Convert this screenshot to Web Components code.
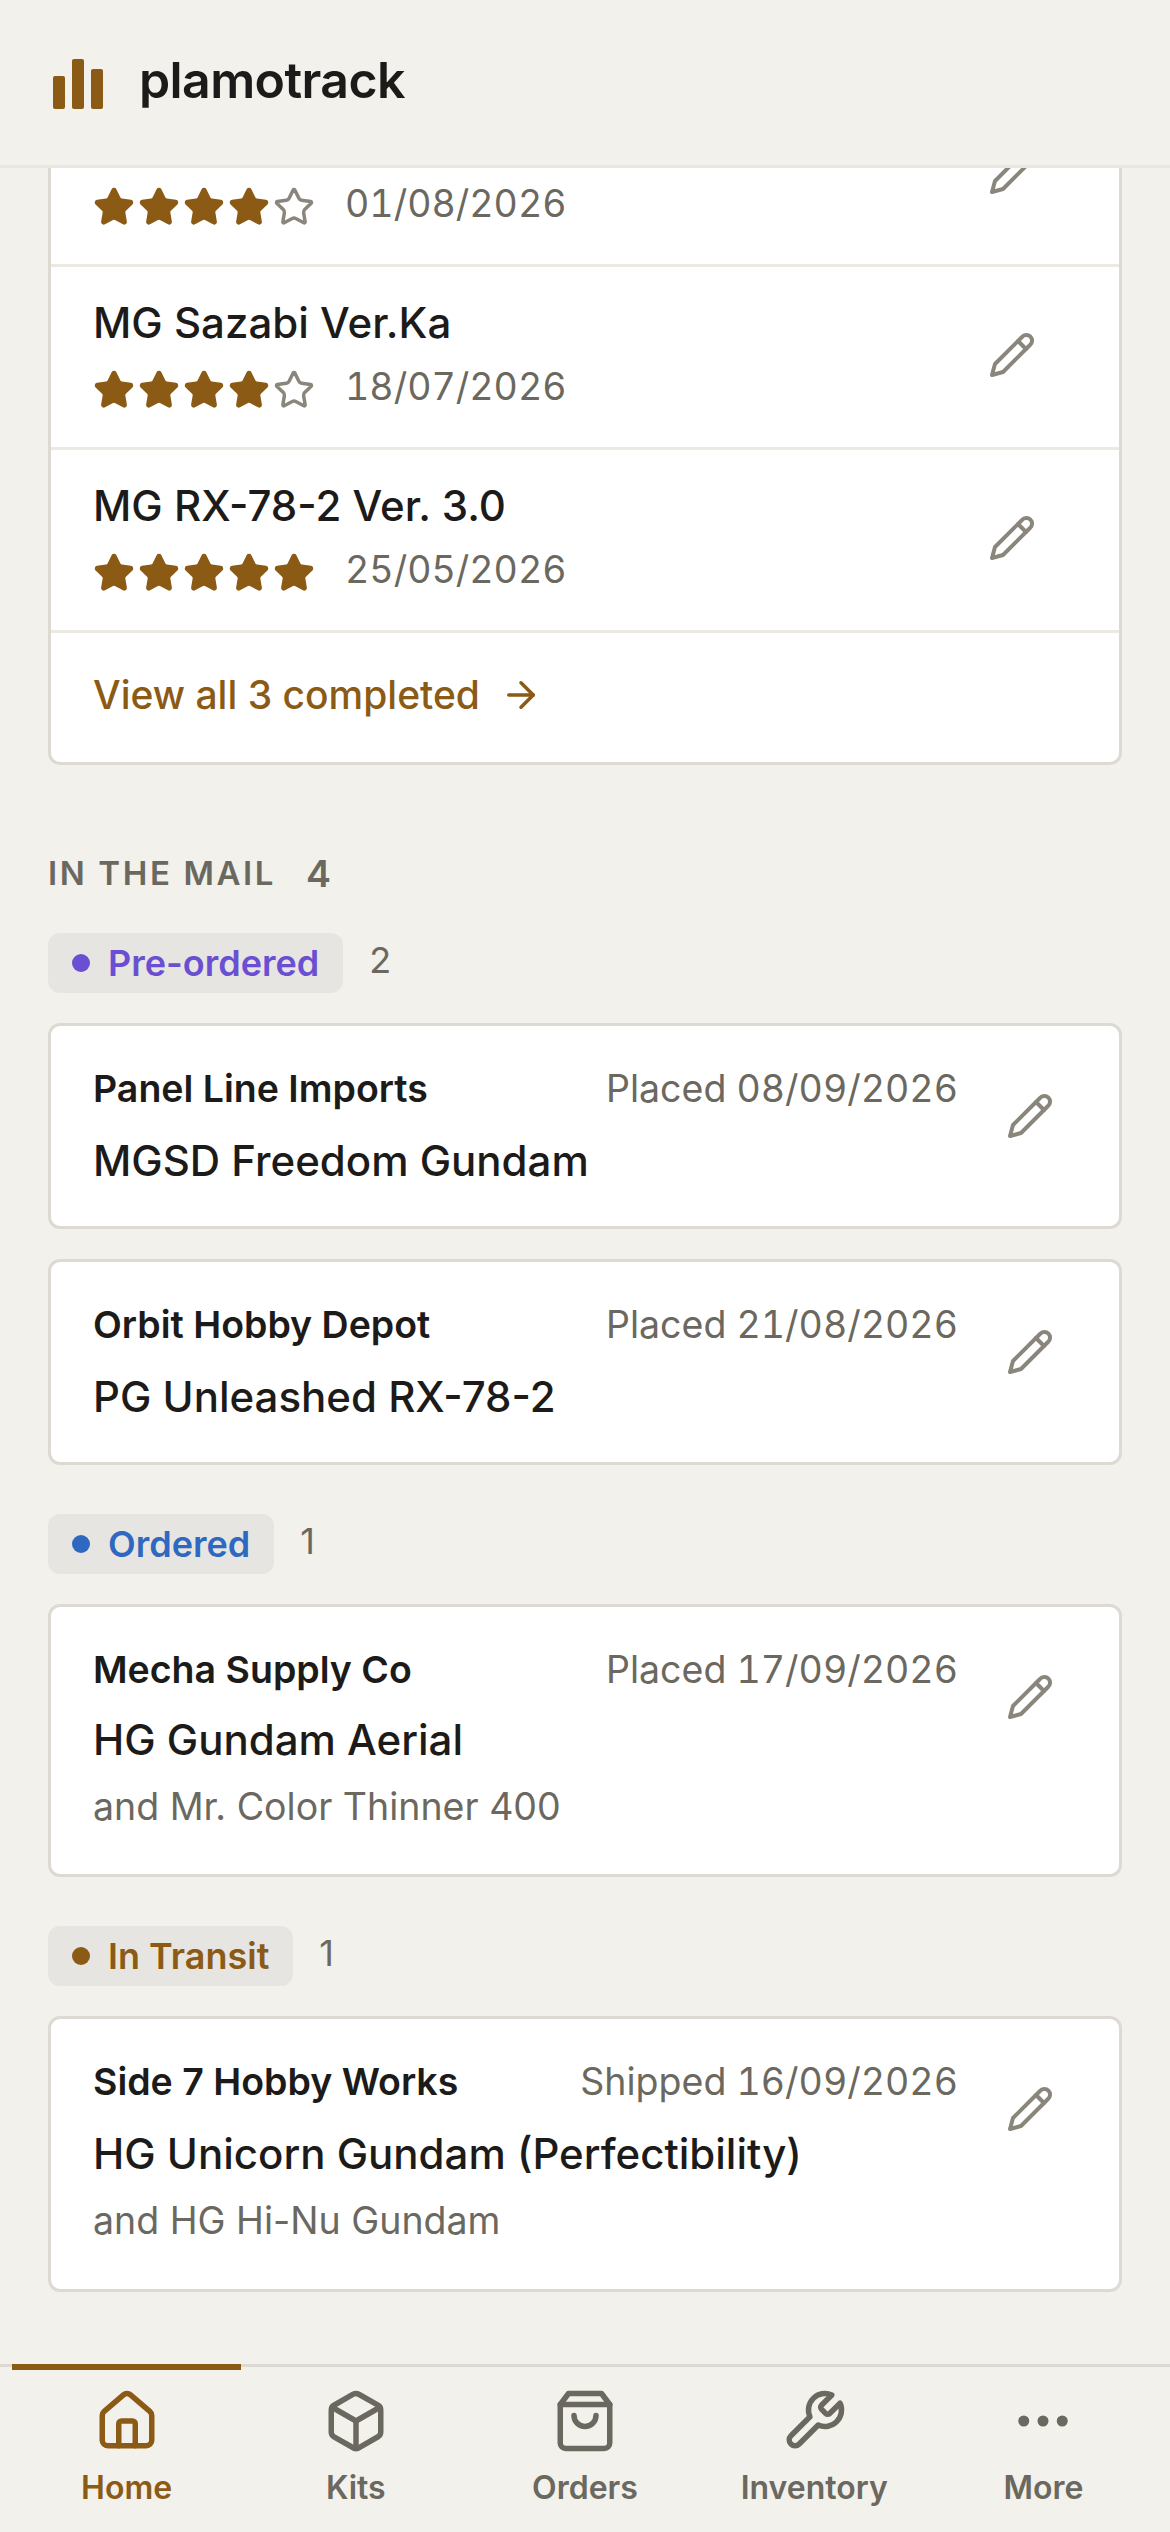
<!DOCTYPE html>
<html>
<head>
<meta charset="utf-8">
<style>
  html, body { margin: 0; padding: 0; }
  body { font-family: Inter, "Liberation Sans", sans-serif; background: #f2f1ec; color: #1c1b19; }
  app-shell { height: 2532px; }
</style>
</head>
<body>
<app-shell>
  <app-header slot="header" name="plamotrack"></app-header>

  <kit-card>
    <kit-row title="&nbsp;" rating="4" date="01/08/2026"></kit-row>
    <kit-row title="MG Sazabi Ver.Ka" rating="4" date="18/07/2026"></kit-row>
    <kit-row title="MG RX-78-2 Ver. 3.0" rating="5" date="25/05/2026"></kit-row>
    <view-all label="View all 3 completed"></view-all>
  </kit-card>

  <section-heading label="In the mail" count="4"></section-heading>

  <status-group label="Pre-ordered" color="#6b4fd3" count="2">
    <order-card shop="Panel Line Imports" date="Placed 08/09/2026" kit="MGSD Freedom Gundam"></order-card>
    <order-card shop="Orbit Hobby Depot" date="Placed 21/08/2026" kit="PG Unleashed RX-78-2"></order-card>
  </status-group>
  <status-group label="Ordered" color="#2f68c0" count="1">
    <order-card style="--kit-gap: 17px; --pad-bottom: 34px" shop="Mecha Supply Co" date="Placed 17/09/2026" kit="HG Gundam Aerial" extra="and Mr. Color Thinner 400"></order-card>
  </status-group>
  <status-group label="In Transit" color="#8b5a14" count="1">
    <order-card shop="Side 7 Hobby Works" date="Shipped 16/09/2026" kit="HG Unicorn Gundam (Perfectibility)" extra="and HG Hi-Nu Gundam"></order-card>
  </status-group>

  <bottom-nav slot="footer">
    <nav-tab icon="house" label="Home" active></nav-tab>
    <nav-tab icon="box" label="Kits"></nav-tab>
    <nav-tab icon="bag" label="Orders"></nav-tab>
    <nav-tab icon="wrench" label="Inventory"></nav-tab>
    <nav-tab icon="dots" label="More"></nav-tab>
  </bottom-nav>
</app-shell>

<script>
const ICONS = {
  house: '<path d="M15 21v-8a1 1 0 0 0-1-1h-4a1 1 0 0 0-1 1v8"/><path d="M3 10a2 2 0 0 1 .709-1.528l7-5.999a2 2 0 0 1 2.582 0l7 5.999A2 2 0 0 1 21 10v9a2 2 0 0 1-2 2H5a2 2 0 0 1-2-2z"/>',
  box: '<path d="M21 8a2 2 0 0 0-1-1.73l-7-4a2 2 0 0 0-2 0l-7 4A2 2 0 0 0 3 8v8a2 2 0 0 0 1 1.73l7 4a2 2 0 0 0 2 0l7-4A2 2 0 0 0 21 16Z"/><path d="m3.3 7 8.7 5 8.7-5"/><path d="M12 22V12"/>',
  bag: '<path d="M6 2 3 6v14a2 2 0 0 0 2 2h14a2 2 0 0 0 2-2V6l-3-4Z"/><path d="M3 6h18"/><path d="M16 10a4 4 0 0 1-8 0"/>',
  wrench: '<path d="M14.7 6.3a1 1 0 0 0 0 1.4l1.6 1.6a1 1 0 0 0 1.4 0l3.77-3.77a6 6 0 0 1-7.94 7.94l-6.91 6.91a2.12 2.12 0 0 1-3-3l6.91-6.91a6 6 0 0 1 7.94-7.94l-3.76 3.76z"/>',
  dots: '<circle cx="5" cy="12" r="1"/><circle cx="12" cy="12" r="1"/><circle cx="19" cy="12" r="1"/>',
  pencil: '<path d="M17 3a2.85 2.83 0 1 1 4 4L7.5 20.5 2 22l1.5-5.5Z"/><path d="m15 5 4 4"/>',
  star: '<path d="M11.525 2.295a.53.53 0 0 1 .95 0l2.31 4.679a2.123 2.123 0 0 0 1.595 1.16l5.166.756a.53.53 0 0 1 .294.904l-3.736 3.638a2.123 2.123 0 0 0-.611 1.878l.882 5.14a.53.53 0 0 1-.771.56l-4.618-2.428a2.122 2.122 0 0 0-1.973 0L6.396 21.01a.53.53 0 0 1-.77-.56l.881-5.139a2.122 2.122 0 0 0-.611-1.879L2.16 9.795a.53.53 0 0 1 .294-.906l5.165-.755a2.122 2.122 0 0 0 1.597-1.16z"/>',
  arrow: '<path d="M5 12h14"/><path d="m12 5 7 7-7 7"/>'
};

function icon(name, size, extra = '') {
  return `<svg width="${size}" height="${size}" viewBox="0 0 24 24" fill="none" stroke="currentColor" stroke-width="2" stroke-linecap="round" stroke-linejoin="round" ${extra}>${ICONS[name]}</svg>`;
}

class AppShell extends HTMLElement {
  constructor() {
    super();
    this.attachShadow({mode: 'open'});
    this.shadowRoot.innerHTML = `
      <style>
        :host { display: flex; flex-direction: column; overflow: hidden; }
        main { flex: 1; min-height: 0; overflow: hidden; padding: 0 48px; }
      </style>
      <slot name="header"></slot>
      <main><slot></slot></main>
      <slot name="footer"></slot>
    `;
  }
}

class AppHeader extends HTMLElement {
  constructor() {
    super();
    this.attachShadow({mode: 'open'});
    this.shadowRoot.innerHTML = `
      <style>
        :host { display: flex; align-items: center; gap: 36px; height: 165px; padding-left: 53px; border-bottom: 3px solid #e9e7e1; background: #f2f1ec; }
        svg { display: block; flex: none; margin-top: 3px; }
        span { font-size: 50px; font-weight: 600; letter-spacing: -0.6px; color: #1c1b19; line-height: 1; padding-bottom: 5px; }
      </style>
      <svg width="50" height="50" viewBox="0 0 50 50" fill="#8b5a14">
        <rect x="0" y="17" width="12" height="33" rx="2"/>
        <rect x="19" y="0" width="12" height="50" rx="2"/>
        <rect x="38" y="10" width="12" height="40" rx="2"/>
      </svg>
      <span></span>
    `;
    this.shadowRoot.querySelector('span').textContent = this.getAttribute('name');
  }
}

class KitCard extends HTMLElement {
  constructor() {
    super();
    this.attachShadow({mode: 'open'});
    this.shadowRoot.innerHTML = `
      <style>
        /* scrolled: the first row sits partly under the header */
        :host { display: block; background: #fff; border: 3px solid #dcdad2; border-radius: 12px; margin-top: -87px; }
      </style>
      <slot></slot>
    `;
  }
}

class KitRow extends HTMLElement {
  constructor() {
    super();
    this.attachShadow({mode: 'open'});
    const rating = Number(this.getAttribute('rating'));
    let stars = '';
    for (let i = 0; i < 5; i++) {
      stars += icon('star', 42, i < rating ? 'class="on"' : 'class="off"');
    }
    this.shadowRoot.innerHTML = `
      <style>
        :host { display: flex; align-items: center; height: 180px; padding: 0 83px 0 42px; border-bottom: 3px solid #ece9e3; }
        .body { flex: 1; align-self: flex-start; padding-top: 26px; }
        .title { font-size: 42px; font-weight: 500; line-height: 60px; color: #1c1b19; }
        .meta { display: flex; align-items: center; margin-top: 16px; height: 42px; }
        .stars { display: flex; gap: 3px; margin-right: 30px; }
        svg { display: block; flex: none; }
        .on { color: #8b5a14; fill: #8b5a14; }
        .off { color: #8a867c; }
        .date { font-size: 37.5px; font-variant-numeric: tabular-nums; color: #6b6860; line-height: 48px; padding-bottom: 7px; }
        .edit { color: #8a867c; margin-bottom: 4px; }
      </style>
      <div class="body">
        <div class="title"></div>
        <div class="meta"><div class="stars">${stars}</div><span class="date"></span></div>
      </div>
      <div class="edit">${icon('pencil', 48)}</div>
    `;
    this.shadowRoot.querySelector('.title').innerHTML = this.getAttribute('title');
    this.shadowRoot.querySelector('.date').textContent = this.getAttribute('date');
  }
}

class ViewAll extends HTMLElement {
  constructor() {
    super();
    this.attachShadow({mode: 'open'});
    this.shadowRoot.innerHTML = `
      <style>
        :host { display: flex; align-items: center; gap: 20px; height: 123px; padding: 0 0 6px 42px; font-size: 39px; font-weight: 500; color: #8b5a14; }
        svg { display: block; }
      </style>
      <span></span>${icon('arrow', 42)}
    `;
    this.shadowRoot.querySelector('span').textContent = this.getAttribute('label');
  }
}

class SectionHeading extends HTMLElement {
  constructor() {
    super();
    this.attachShadow({mode: 'open'});
    this.shadowRoot.innerHTML = `
      <style>
        :host { display: flex; align-items: center; gap: 30px; height: 42px; margin-top: 87px; color: #6b6860; font-weight: 600; }
        .label { font-size: 33px; letter-spacing: 2.6px; text-transform: uppercase; }
        .count { font-size: 37.5px; }
      </style>
      <span class="label"></span><span class="count"></span>
    `;
    this.shadowRoot.querySelector('.label').textContent = this.getAttribute('label');
    this.shadowRoot.querySelector('.count').textContent = this.getAttribute('count');
  }
}

class StatusGroup extends HTMLElement {
  constructor() {
    super();
    this.attachShadow({mode: 'open'});
    const color = this.getAttribute('color');
    this.shadowRoot.innerHTML = `
      <style>
        :host { display: block; margin-top: 49px; }
        :host(:first-of-type) { margin-top: 39px; }
        .head { display: flex; align-items: center; gap: 26px; margin-bottom: 30px; }
        .pill { display: flex; align-items: center; gap: 18px; height: 60px; padding: 0 24px; border-radius: 12px; background: #e6e5e2; color: ${color}; font-size: 36px; font-weight: 600; }
        .dot { width: 18px; height: 18px; border-radius: 50%; background: ${color}; }
        .count { font-size: 36px; color: #6b6860; padding-bottom: 7px; }
        .cards { display: flex; flex-direction: column; gap: 30px; }
      </style>
      <div class="head">
        <div class="pill"><span class="dot"></span><span class="label"></span></div>
        <span class="count"></span>
      </div>
      <div class="cards"><slot></slot></div>
    `;
    this.shadowRoot.querySelector('.label').textContent = this.getAttribute('label');
    this.shadowRoot.querySelector('.count').textContent = this.getAttribute('count');
  }
}

class OrderCard extends HTMLElement {
  constructor() {
    super();
    this.attachShadow({mode: 'open'});
    this.shadowRoot.innerHTML = `
      <style>
        :host { display: flex; align-items: flex-start; background: #fff; border: 3px solid #dcdad2; border-radius: 12px; padding: 38px 65px var(--pad-bottom, 35px) 42px; }
        .body { flex: 1; min-width: 0; }
        .top { display: flex; justify-content: space-between; align-items: center; height: 48px; }
        .shop { font-size: 37.5px; font-weight: 600; color: #1c1b19; }
        .date { font-size: 37.5px; font-variant-numeric: tabular-nums; color: #6b6860; }
        .kit { font-size: 42px; font-weight: 500; line-height: 60px; margin-top: var(--kit-gap, 19px); color: #1c1b19; }
        .extra { font-size: 37.5px; line-height: 48px; margin: 13px 0 9px; color: #6b6860; }
        .edit { color: #8a867c; margin-left: 48px; margin-top: 28px; }
        svg { display: block; }
      </style>
      <div class="body">
        <div class="top"><span class="shop"></span><span class="date"></span></div>
        <div class="kit"></div>
        <div class="extra"></div>
      </div>
      <div class="edit">${icon('pencil', 48)}</div>
    `;
    const q = s => this.shadowRoot.querySelector(s);
    q('.shop').textContent = this.getAttribute('shop');
    q('.date').textContent = this.getAttribute('date');
    q('.kit').textContent = this.getAttribute('kit');
    if (this.hasAttribute('extra')) q('.extra').textContent = this.getAttribute('extra');
    else q('.extra').remove();
  }
}

class BottomNav extends HTMLElement {
  constructor() {
    super();
    this.attachShadow({mode: 'open'});
    this.shadowRoot.innerHTML = `
      <style>
        :host { display: grid; grid-template-columns: repeat(5, 1fr); height: 165px; padding: 0 12px; border-top: 3px solid #dcdad2; background: #f2f1ec; }
      </style>
      <slot></slot>
    `;
  }
}

class NavTab extends HTMLElement {
  constructor() {
    super();
    this.attachShadow({mode: 'open'});
    this.shadowRoot.innerHTML = `
      <style>
        :host { display: flex; flex-direction: column; align-items: center; margin-top: -3px; padding-top: 18px; color: #6b6860; border-top: 6px solid transparent; }
        :host([active]) { color: #8b5a14; border-top-color: #8b5a14; }
        svg { display: block; }
        span { font-size: 32px; font-weight: 600; line-height: 40px; margin-top: 14px; }
      </style>
      ${icon(this.getAttribute('icon'), 66)}
      <span></span>
    `;
    this.shadowRoot.querySelector('span').textContent = this.getAttribute('label');
  }
}

customElements.define('app-shell', AppShell);
customElements.define('app-header', AppHeader);
customElements.define('kit-card', KitCard);
customElements.define('kit-row', KitRow);
customElements.define('view-all', ViewAll);
customElements.define('section-heading', SectionHeading);
customElements.define('status-group', StatusGroup);
customElements.define('order-card', OrderCard);
customElements.define('bottom-nav', BottomNav);
customElements.define('nav-tab', NavTab);
</script>
</body>
</html>
